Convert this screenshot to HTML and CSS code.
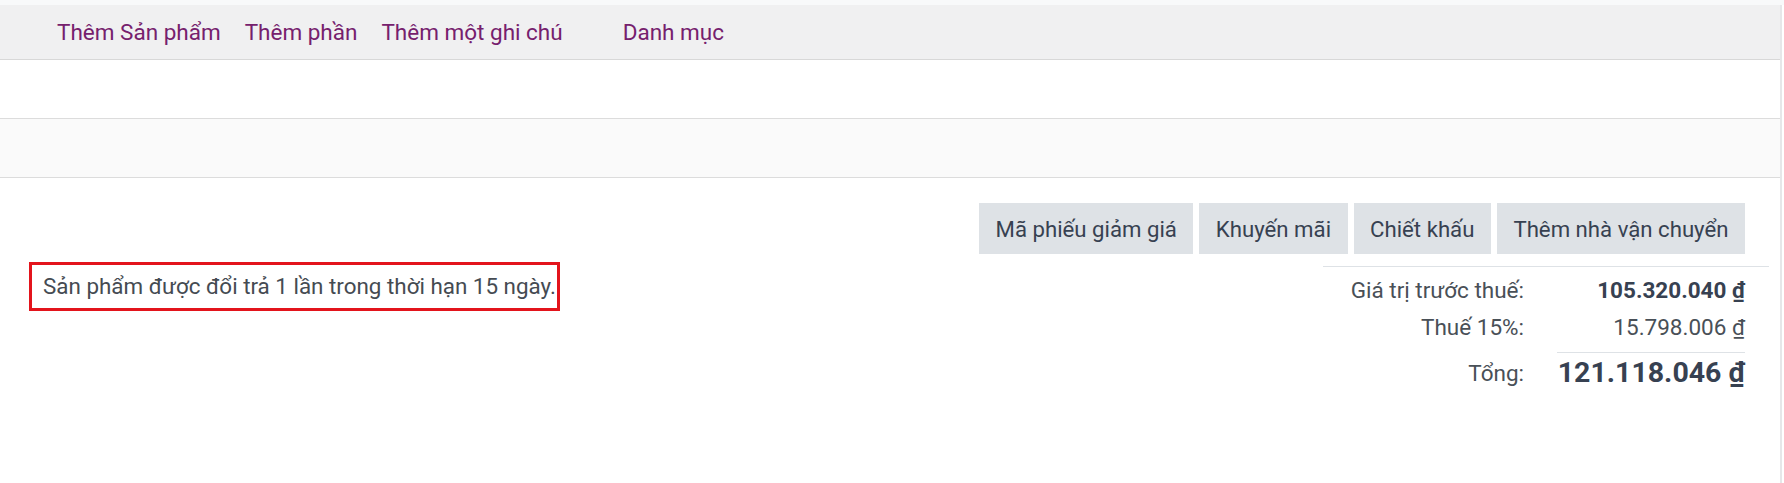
FILE: index.html
```html
<!DOCTYPE html>
<html lang="vi">
<head>
<meta charset="utf-8">
<title>Đơn hàng</title>
<link rel="stylesheet" href="styles.css">
</head>
<body>
<div class="top-strip"></div>
<div class="sheet">
  <div class="control-bar">
    <a class="ctl" href="#">Thêm Sản phẩm</a>
    <a class="ctl" href="#">Thêm phần</a>
    <a class="ctl" href="#">Thêm một ghi chú</a>
    <a class="ctl ctl-catalog" href="#">Danh mục</a>
  </div>
  <div class="row-empty"></div>
  <div class="row-light"></div>
  <div class="bottom">
    <div class="actions">
      <button class="btn">Mã phiếu giảm giá</button>
      <button class="btn">Khuyến mãi</button>
      <button class="btn">Chiết khấu</button>
      <button class="btn">Thêm nhà vận chuyển</button>
    </div>
    <div class="summary">
      <div class="note"><span class="note-box">Sản phẩm được đổi trả 1 lần trong thời hạn 15 ngày.</span></div>
      <div class="totals">
        <div class="t-label">Giá trị trước thuế:</div>
        <div class="t-value t-bold">105.320.040 <span class="cur">₫</span></div>
        <div class="t-label">Thuế 15%:</div>
        <div class="t-value">15.798.006 <span class="cur">₫</span></div>
        <div class="t-label t-label-total">Tổng:</div>
        <div class="t-value t-grand">121.118.046 <span class="cur">₫</span></div>
      </div>
    </div>
  </div>
</div>
</body>
</html>
```
FILE: styles.css
```css
html, body {
  margin: 0;
  padding: 0;
  background: #ffffff;
}
body {
  font-family: Roboto, "Noto Sans", sans-serif;
  color: #495057;
}
.top-strip {
  height: 5px;
  background: #f8f9fa;
}
.sheet {
  width: 1782px;
  border-right: 2px solid #e6e7e9;
  height: 478px;
  box-sizing: border-box;
}
.control-bar {
  height: 55px;
  background: #f0f0f1;
  border-bottom: 1px solid #d8d8d8;
  box-sizing: border-box;
  display: flex;
  align-items: center;
  padding-left: 57px;
  gap: 24px;
}
.ctl {
  font-size: 22.5px;
  color: #76206d;
  text-decoration: none;
}
.ctl-catalog {
  margin-left: 36px;
}
.row-empty {
  height: 59px;
  border-bottom: 1px solid #dcdcdc;
  box-sizing: border-box;
}
.row-light {
  height: 59px;
  background: #fafafa;
  border-bottom: 1px solid #dcdcdc;
  box-sizing: border-box;
}
.actions {
  display: flex;
  justify-content: flex-end;
  gap: 6px;
  padding-top: 25px;
  padding-right: 35px;
}
.btn {
  height: 51px;
  padding: 0 16.5px;
  border: none;
  background: #dee2e6;
  color: #374151;
  font-family: Roboto, "Noto Sans", sans-serif;
  font-size: 22.2px;
}
.summary {
  display: flex;
  justify-content: space-between;
  align-items: flex-start;
}
.note {
  padding-top: 8px;
  padding-left: 29px;
}
.note-box {
  display: inline-block;
  border: 3px solid #e3141c;
  padding: 8px 1px 9px 11px;
  font-size: 22.4px;
  line-height: 26px;
  color: #454b52;
}
.totals {
  margin-top: 12px;
  margin-right: 11px;
  width: 446px;
  box-sizing: border-box;
  border-top: 1px solid #dee2e6;
  padding-right: 24px;
  display: grid;
  grid-template-columns: 1fr 188px;
  column-gap: 33px;
  font-size: 22.5px;
}
.t-label {
  text-align: right;
  color: #495057;
  line-height: 37px;
  white-space: nowrap;
}
.t-value {
  text-align: right;
  color: #495057;
  line-height: 37px;
  white-space: nowrap;
}
.t-label:first-child, .t-label:first-child + .t-value {
  padding-top: 5px;
}
.t-bold {
  font-weight: 700;
  color: #374151;
}
.t-grand {
  font-size: 28.5px;
  font-weight: 700;
  color: #374151;
  border-top: 1px solid #dee2e6;
  margin-top: 6px;
  line-height: 40px;
}
.t-label-total {
  margin-top: 6px;
  line-height: 42px;
}
.cur {
  text-decoration: underline;
}
```
